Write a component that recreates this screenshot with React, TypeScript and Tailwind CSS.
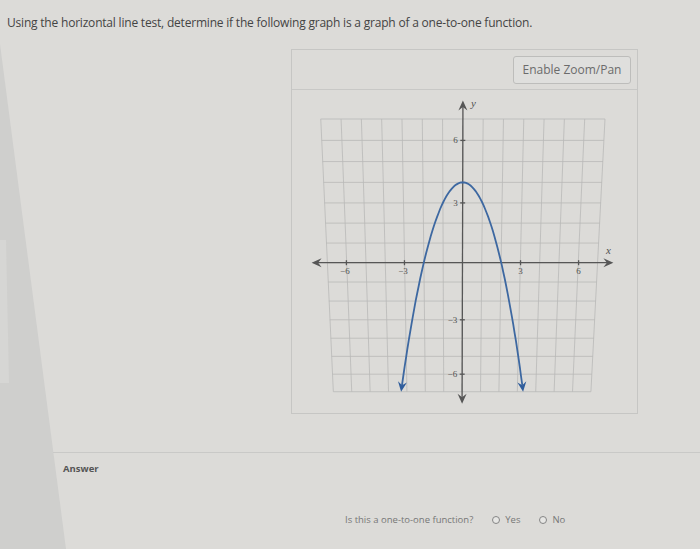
type Pt = [number, number];

// graph units -> page pixels (the photo is slightly keystoned, so the unit shrinks downward)
function P(u: number, v: number): Pt {
  return [461.5 + 0.054 * v + u * (19.35 + 0.136 * v), 262.7 - 19.48 * v - 0.15 * v * v];
}

function arrow(tip: Pt, from: Pt, len = 10, half = 4.5, notch = 6.5): string {
  const dx = tip[0] - from[0];
  const dy = tip[1] - from[1];
  const d = Math.hypot(dx, dy) || 1;
  const ux = dx / d;
  const uy = dy / d;
  const nx = -uy;
  const ny = ux;
  const pts: Pt[] = [
    tip,
    [tip[0] - len * ux + half * nx, tip[1] - len * uy + half * ny],
    [tip[0] - notch * ux, tip[1] - notch * uy],
    [tip[0] - len * ux - half * nx, tip[1] - len * uy - half * ny],
  ];
  return pts.map((p) => p.map((n) => n.toFixed(1)).join(",")).join(" ");
}

function Graph() {
  const ticks = [-7, -6, -5, -4, -3, -2, -1, 0, 1, 2, 3, 4, 5, 6, 7];

  const curve: Pt[] = [];
  const end = 3.26;
  for (let i = 0; i <= 80; i++) {
    const u = -end + (2 * end * i) / 80;
    curve.push(P(u, 4 - u * u));
  }
  const curveD = curve
    .map((p, i) => `${i === 0 ? "M" : "L"}${p[0].toFixed(1)} ${p[1].toFixed(1)}`)
    .join(" ");
  const tipL = P(-3.317, -7);
  const tipR = P(3.317, -7);

  const xl = P(-7.8, 0);
  const xr = P(7.8, 0);
  const yt = P(0, 7.85);
  const yb = P(0, -7.7);

  const xLabels = [-6, -3, 3, 6];
  const yLabels = [6, 3, -3, -6];

  return (
    <svg viewBox="291 90 345 323" className="block h-[323px] w-[345px]">
      <g stroke="#b9b9b7" strokeWidth="0.8">
        {ticks.map((t) => {
          const a = P(t, 7);
          const b = P(t, -7);
          const c = P(-7, t);
          const d = P(7, t);
          return (
            <g key={t}>
              <line x1={a[0]} y1={a[1]} x2={b[0]} y2={b[1]} />
              <line x1={c[0]} y1={c[1]} x2={d[0]} y2={d[1]} />
            </g>
          );
        })}
      </g>

      <g stroke="#565656" strokeWidth="1.3">
        <line x1={xl[0] + 6} y1={xl[1]} x2={xr[0] - 6} y2={xr[1]} />
        <line x1={yt[0]} y1={yt[1] + 6} x2={yb[0]} y2={yb[1] - 6} />
        {yLabels.map((v) => {
          const p = P(0, v);
          return <line key={v} x1={p[0] - 2.5} y1={p[1]} x2={p[0] + 2.5} y2={p[1]} />;
        })}
        {xLabels.map((u) => {
          const p = P(u, 0);
          return <line key={u} x1={p[0]} y1={p[1] - 2.5} x2={p[0]} y2={p[1] + 2.5} />;
        })}
      </g>
      <g fill="#565656">
        <polygon points={arrow(xl, P(0, 0))} />
        <polygon points={arrow(xr, P(0, 0))} />
        <polygon points={arrow(yt, P(0, 0))} />
        <polygon points={arrow(yb, P(0, 0))} />
      </g>

      <g fontFamily="'Liberation Serif', 'DejaVu Serif', serif" fontSize="9" fill="#505050">
        {xLabels.map((u) => {
          const p = P(u, 0);
          return (
            <text key={u} x={p[0] - (u < 0 ? 1.5 : 0)} y={p[1] + 11} textAnchor="middle">
              {u < 0 ? `\u2212${-u}` : u}
            </text>
          );
        })}
        {yLabels.map((v) => {
          const p = P(0, v);
          return (
            <text key={v} x={p[0] - 5} y={p[1] + 3} textAnchor="end">
              {v < 0 ? `\u2212${-v}` : v}
            </text>
          );
        })}
        <text x="605" y="254" fontSize="11" fontStyle="italic">
          x
        </text>
        <text x="470" y="107" fontSize="11" fontStyle="italic">
          y
        </text>
      </g>

      <path d={curveD} fill="none" stroke="#3d68a1" strokeWidth="1.8" />
      <g fill="#2f5d9c">
        <polygon points={arrow(tipL, P(-3.2, 4 - 3.2 * 3.2))} />
        <polygon points={arrow(tipR, P(3.2, 4 - 3.2 * 3.2))} />
      </g>
    </svg>
  );
}

function Radio({ label }: { label: string }) {
  return (
    <label className="flex items-center gap-[5px]">
      <span className="h-[8px] w-[8px] rounded-full border border-[#858585] bg-[#e6e6e4]" />
      <span>{label}</span>
    </label>
  );
}

export default function App() {
  return (
    <div className="relative h-[549px] w-[700px] overflow-hidden bg-[#dcdbd8] font-['Open_Sans',sans-serif]">
      {/* left edge of the screen, slanted in the photo */}
      <div
        aria-hidden
        className="absolute inset-0 bg-[#cfcfcd] [clip-path:polygon(0_44px,66px_549px,0_549px)]"
      />
      <div
        aria-hidden
        className="absolute left-0 top-[240px] h-[143px] w-[9px] bg-[#d6d6d4] [clip-path:polygon(0_0,6px_0,9px_100%,0_100%)]"
      />

      <main className="relative">
        <p className="pl-[7px] pt-[15px] text-[12px] leading-[16px] tracking-[-0.2px] text-[#444444]">
          Using the horizontal line test, determine if the following graph is a graph of a
          one-to-one function.
        </p>

        <section className="ml-[291px] mt-[18px] w-[347px] border border-[#c6c6c4]">
          <div className="flex h-[40px] justify-end border-b border-[#c8c8c6] pr-[6px] pt-[6px]">
            <button className="h-[28px] w-[118px] rounded-[3px] border border-[#bdbdbb] bg-[#dfdfdd] text-[12px] text-[#6b6b6b]">
              Enable Zoom/Pan
            </button>
          </div>
          <Graph />
        </section>

        <div className="ml-[53px] mt-[38px] border-t border-[#c9c9c7]">
          <p className="pl-[10px] pt-[10px] text-[9.5px] font-bold leading-[12px] text-[#555555]">
            Answer
          </p>
          <div className="mt-[39px] flex items-center pl-[292px] text-[9.5px] leading-[12px] text-[#777777]">
            <span>Is this a one-to-one function?</span>
            <div className="ml-[19px] flex items-center gap-[19px]">
              <Radio label="Yes" />
              <Radio label="No" />
            </div>
          </div>
        </div>
      </main>
    </div>
  );
}
